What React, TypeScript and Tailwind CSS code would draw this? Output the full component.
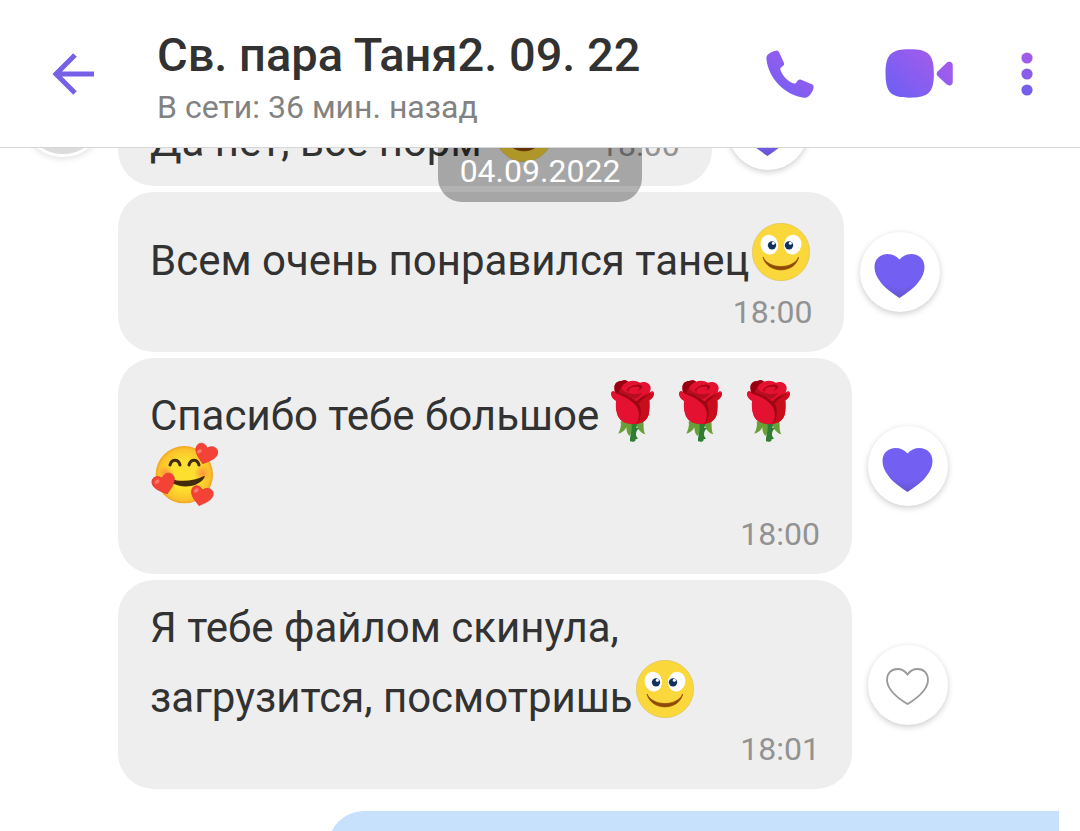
import { useId } from "react";
import type { ReactNode } from "react";

function BrandGradient({ id }: { id: string }) {
  return (
    <linearGradient id={id} x1="0.1" y1="1" x2="0.9" y2="0">
      <stop offset="0" stopColor="#6f5ff4" />
      <stop offset="1" stopColor="#a45ceb" />
    </linearGradient>
  );
}

function ArrowIcon() {
  return (
    <svg viewBox="0 0 42 42" className="size-[42px]" fill="none" stroke="#7560e6" strokeWidth="5" aria-hidden="true">
      <path d="M42 21H4M23 2L4 21l19 19" />
    </svg>
  );
}

function PhoneIcon() {
  const id = useId();
  return (
    <svg viewBox="77 88 146 147" className="size-12" aria-hidden="true">
      <defs>
        <BrandGradient id={id} />
      </defs>
      <path
        fill={`url(#${id})`}
        d="M86 99C93 94 101 91 107 90C112 89 115 92 117 96L131 126C133 131 132 135 127 138C121 142 119 145 121 150C128 168 143 184 160 190C165 192 168 190 171 185C175 179 179 177 184 179L215 192C221 194 223 198 222 204C220 213 215 222 208 229C203 234 198 235 192 234C133 226 84 173 78 117C77 109 79 104 86 99Z"
      />
    </svg>
  );
}

function VideoIcon() {
  const id = useId();
  return (
    <svg viewBox="435 86 204 148" className="h-[49px] w-[68px]" aria-hidden="true">
      <defs>
        <linearGradient id={id} gradientUnits="userSpaceOnUse" x1="455" y1="225" x2="575" y2="100">
          <stop offset="0" stopColor="#6f5ff4" />
          <stop offset="1" stopColor="#a05cec" />
        </linearGradient>
      </defs>
      <path
        fill={`url(#${id})`}
        d="M509 87C566 87 582 103 582 160C582 217 566 233 509 233C452 233 436 217 436 160C436 103 452 87 509 87ZM594 153L619 129C627 121 639 124 639 135V186C639 197 627 199 619 192L594 168C589 163 589 158 594 153Z"
      />
    </svg>
  );
}

function DotsIcon() {
  return (
    <svg viewBox="0 0 12 44" className="h-11 w-3" aria-hidden="true">
      <circle cx="6" cy="6" r="5.6" fill="#a05ce9" />
      <circle cx="6" cy="22" r="5.6" fill="#895de8" />
      <circle cx="6" cy="38" r="5.6" fill="#7460ea" />
    </svg>
  );
}

function Smiley() {
  return (
    <svg viewBox="51 60 174 174" className="mr-0.5 ml-[3px] inline-block size-[58px] align-[-6px]" role="img" aria-label="Улыбка">
      <circle cx="138" cy="147" r="86" fill="#fad73b" stroke="#ddc261" strokeWidth="2" />
      <ellipse cx="103" cy="125" rx="26" ry="30" fill="#fff" transform="rotate(-14 103 125)" />
      <ellipse cx="173" cy="125" rx="26" ry="30" fill="#fff" transform="rotate(14 173 125)" />
      <circle cx="111" cy="127" r="12.5" fill="#12305f" />
      <circle cx="162" cy="127" r="12.5" fill="#12305f" />
      <circle cx="115" cy="121" r="4.5" fill="#fff" />
      <circle cx="166" cy="121" r="4.5" fill="#fff" />
      <path d="M84 162C101 200 175 200 191 162C181 213 96 214 84 162Z" fill="#8f4a08" stroke="#8f4a08" strokeWidth="2" />
    </svg>
  );
}

function Rose() {
  return (
    <svg viewBox="21 54 204 192" className="inline-block h-16 w-[68px] align-[-12px]" role="img" aria-label="Роза">
      <path d="M86 184C89 198 84 210 79 221C90 219 99 211 103 202C103 213 106 222 112 228C119 221 121 210 122 200L135 198C139 210 148 220 160 223C153 211 156 198 154 184Z" fill="#689f38" />
      <path d="M117 190C124 205 113 225 114 244C119 246 127 246 130 243C129 238 132 236 138 236L133 229C130 221 133 212 141 205L133 203L136 190Z" fill="#2e7d32" />
      <path d="M57 99C59 92 64 91 69 95C64 76 70 64 88 63C96 59 103 60 108 65C119 60 133 61 144 68C160 61 176 71 176 84C176 90 174 94 172 98C181 90 187 94 186 101C184 111 177 117 172 121C173 135 173 151 170 164C164 184 147 192 124 192C97 192 80 181 75 160C71 145 73 131 72 122C62 117 56 109 57 99Z" fill="#e41230" />
      <path d="M69 95C64 76 70 64 88 63C96 59 103 60 108 65C96 70 90 75 87 86C85 92 91 97 101 102C116 107 132 106 146 101C139 112 126 116 116 114C92 108 77 105 69 95Z" fill="#98000f" />
      <path d="M88 84C93 96 123 108 150 99C142 114 124 123 108 111C98 106 87 98 80 100C80 92 83 87 88 84Z" fill="#b80d20" />
      <path d="M111 99C103 89 120 78 136 80C147 81 145 90 133 91C149 93 154 81 148 76C138 68 109 79 104 91Z" fill="#a50516" />
      <path d="M57 98C80 99 98 103 115 113C136 124 150 140 145 164C143 178 137 186 129 192C151 190 165 180 170 164C173 151 173 135 172 121C181 115 185 111 186 101L170 98C158 104 151 107 142 117C152 108 162 104 177 103C160 108 145 116 137 126C119 107 85 98 57 98Z" fill="#c90d1d" />
      <path d="M57 98C60 113 66 119 72 122C71 134 71 147 75 160C80 181 97 192 124 192C142 178 146 156 133 137C119 116 88 103 57 98Z" fill="#e41230" />
      <path d="M62 95C83 98 102 102 121 116C127 121 132 124 135 124C145 111 157 106 177 103C161 110 148 119 140 130C151 151 148 176 134 191C144 171 143 151 130 135C115 117 88 104 62 95Z" fill="#9d0714" />
    </svg>
  );
}

function HeartsFace() {
  const id = useId();
  const heart =
    "M0 28C-14 17 -29 7 -29 -8C-29 -22 -12 -28 -1 -14C10 -28 29 -22 29 -8C29 7 14 17 0 28Z";
  return (
    <svg viewBox="60 36 204 198" className="block h-[66px] w-[68px]" role="img" aria-label="Улыбка с сердечками">
      <defs>
        <radialGradient id={`${id}f`}>
          <stop offset="0.5" stopColor="#fde02f" />
          <stop offset="0.9" stopColor="#fbc02b" />
          <stop offset="1" stopColor="#efa321" />
        </radialGradient>
        <radialGradient id={`${id}c`}>
          <stop offset="0" stopColor="#ff7043" stopOpacity="0.65" />
          <stop offset="1" stopColor="#ff7043" stopOpacity="0" />
        </radialGradient>
      </defs>
      <circle cx="163" cy="134" r="86" fill={`url(#${id}f)`} />
      <circle cx="108" cy="130" r="24" fill={`url(#${id}c)`} />
      <circle cx="216" cy="130" r="25" fill={`url(#${id}c)`} />
      <path d="M120 105C125 86 145 86 150 105M177 105C182 86 202 86 207 105" fill="none" stroke="#422b0d" strokeWidth="9" strokeLinecap="round" />
      <path d="M123 147C153 157 195 153 222 138C226 137 224 142 221 146C197 175 153 174 125 158Z" fill="#422b0d" />
      <g fill="#f44336" stroke="#d52f2d" strokeWidth="1.5">
        <path d={heart} transform="translate(228 70) rotate(18) scale(1.16)" />
        <path d={heart} transform="translate(102 160) rotate(-17) scale(1.18)" />
        <path d={heart} transform="translate(215 196) rotate(14) scale(1.14)" />
      </g>
      <g fill="#ff8a80" opacity="0.85">
        <ellipse cx="208" cy="64" rx="8" ry="5" transform="rotate(-38 208 64)" />
        <ellipse cx="81" cy="155" rx="8" ry="5" transform="rotate(-38 81 155)" />
        <ellipse cx="199" cy="181" rx="8" ry="5" transform="rotate(-38 199 181)" />
      </g>
    </svg>
  );
}

function LikeButton({ liked }: { liked: boolean }) {
  const id = useId();
  return (
    <button
      type="button"
      aria-label="Нравится"
      aria-pressed={liked}
      className="size-20 shrink-0 rounded-full bg-white shadow-[0_2px_6px_rgba(0,0,0,0.2)]"
    >
      <svg viewBox="0 0 80 80" className="size-20" aria-hidden="true">
        <defs>
          <radialGradient id={id} cx="0.5" cy="0.3" r="0.75">
            <stop offset="0.6" stopColor="#7360f2" />
            <stop offset="1" stopColor="#6152c4" />
          </radialGradient>
        </defs>
        {liked ? (
          <path
            fill={`url(#${id})`}
            d="M39.500 66C32.500 61 25.500 57 20.500 50C16.500 45 14.500 40 14.500 35C14.500 27 20.500 22 27.500 22C32.500 22 36.500 24 39.500 27.500C42.500 24 46.500 22 51.500 22C58.500 22 64.500 27 64.500 35C64.500 40 62.500 45 58.500 50C53.500 57 46.500 61 39.500 66Z"
          />
        ) : (
          <path
            fill="none"
            stroke="#999"
            strokeWidth="1.8"
            d="M39.500 59C33.500 55.500 27.500 51 23.500 46C20.500 42 19 39 19 35C19 28 23.500 24 29.500 24C33.500 24 37 26 39.500 29.500C42 26 45.500 24 49.500 24C55.500 24 60 28 60 35C60 39 58.500 42 55.500 46C51.500 51 45.500 55.500 39.500 59Z"
          />
        )}
      </svg>
    </button>
  );
}

function Message({
  liked,
  className,
  avatar,
  children,
}: {
  liked: boolean;
  className: string;
  avatar?: boolean;
  children: ReactNode;
}) {
  return (
    <li className="flex items-center">
      <div className="flex w-[118px] shrink-0 justify-center self-start pl-2">
        {avatar && (
          <div className="size-[84px] rounded-full border-3 border-white bg-[#dcdcdc] shadow-[0_2px_6px_rgba(0,0,0,0.12)]" />
        )}
      </div>
      <div className={`mr-4 w-fit max-w-[734px] rounded-[36px] bg-[#eeeeee] px-8 text-[42px] text-[#323232] ${className}`}>
        {children}
      </div>
      <LikeButton liked={liked} />
    </li>
  );
}

function Time({ children }: { children: string }) {
  return <time className="block pt-px text-right text-[32px] leading-9 text-[#929292]">{children}</time>;
}

export default function App() {
  return (
    <div className="flex h-screen flex-col overflow-hidden bg-white font-[Roboto,sans-serif]">
      <header className="flex shrink-0 items-center border-b border-[#d6d6d6] pr-[47px] pl-[52px]">
        <button type="button" aria-label="Назад">
          <ArrowIcon />
        </button>
        <div className="ml-[63px] min-w-0 flex-1 pt-[25px] pb-[18px]">
          <h1 className="truncate text-[47px] leading-[60px] font-medium text-[#323232]">Св. пара Таня2. 09. 22</h1>
          <p className="text-[32px] leading-[44px] text-[#828282]">В сети: 36 мин. назад</p>
        </div>
        <button type="button" aria-label="Позвонить">
          <PhoneIcon />
        </button>
        <button type="button" aria-label="Видеозвонок" className="ml-[71px]">
          <VideoIcon />
        </button>
        <button type="button" aria-label="Меню" className="ml-[68px]">
          <DotsIcon />
        </button>
      </header>

      <main className="relative min-h-0 flex-1 overflow-hidden">
        <ol className="-mt-[75px] flex flex-col gap-[6px]">
          <Message liked avatar className="pt-[31px] pb-3 leading-[64px]">
            <div className="flex items-baseline whitespace-nowrap">
              <p>
                Да нет, все норм <Smiley />
              </p>
              <time className="ml-[45px] text-[32px] leading-9 text-[#929292]">18:00</time>
            </div>
          </Message>
          <Message liked className="pt-[31px] pb-[22px] leading-[64px]">
            <p>
              Всем очень понравился танец
              <Smiley />
            </p>
            <Time>18:00</Time>
          </Message>
          <Message liked className="w-full pt-5 pb-[22px] leading-[52px]">
            <p>
              Спасибо тебе большое
              <Rose />
              <Rose />
              <Rose />
            </p>
            <div className="mb-[7px]">
              <HeartsFace />
            </div>
            <Time>18:00</Time>
          </Message>
          <Message liked={false} className="pt-[15px] pb-[22px] leading-[65px]">
            <p>
              Я тебе файлом скинула, загрузится, посмотришь
              <Smiley />
            </p>
            <Time>18:01</Time>
          </Message>
        </ol>
        <div className="mt-[22px] mr-[21px] ml-[328px] h-20 rounded-l-[36px] bg-[#c7e1fd]" />
        <div className="absolute top-0 left-1/2 w-[204px] -translate-x-1/2 rounded-b-[24px] bg-black/30 pt-[5px] pb-[13px] text-center text-[32px] leading-9 text-white">
          04.09.2022
        </div>
      </main>
    </div>
  );
}
